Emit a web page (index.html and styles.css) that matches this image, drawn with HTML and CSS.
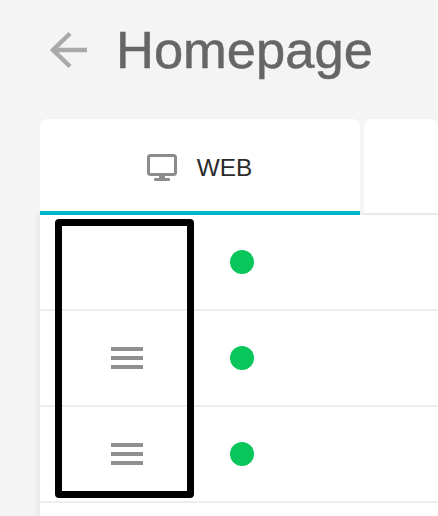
FILE: index.html
```html
<!DOCTYPE html>
<html lang="en">
<head>
<meta charset="utf-8">
<title>Homepage</title>
<link rel="stylesheet" href="styles.css">
</head>
<body>
<main class="page">
  <header class="header">
    <svg class="back" width="38" height="38" viewBox="0 0 38 38" aria-hidden="true"><path d="M37 19H3M20 2.500 3 19l17 16.500" fill="none" stroke="#a9a9a9" stroke-width="4.500"/></svg>
    <h1 class="title">Homepage</h1>
  </header>
  <nav class="tabs">
    <div class="tab tab-active">
      <svg class="monitor" width="30" height="27" viewBox="0 0 30 27" aria-hidden="true"><rect x="1.500" y="1.500" width="27" height="19" rx="2" fill="none" stroke="#8c8c8c" stroke-width="3"/><path d="M12 21h6v3h-6z" fill="#8c8c8c"/><rect x="7" y="24" width="16" height="3" rx="1" fill="#8c8c8c"/></svg>
      <span class="tab-label">WEB</span>
    </div>
    <div class="tab tab-idle"></div>
  </nav>
  <section class="table">
    <div class="row"><div class="cell-handle"></div><span class="dot"></span></div>
    <div class="row"><div class="cell-handle"><span class="burger"><i></i><i></i><i></i></span></div><span class="dot"></span></div>
    <div class="row"><div class="cell-handle"><span class="burger"><i></i><i></i><i></i></span></div><span class="dot"></span></div>
    <div class="highlight"></div>
  </section>
</main>
</body>
</html>
```
FILE: styles.css
```css
* { box-sizing: border-box; }
html, body { margin: 0; height: 100%; overflow: hidden; }
body { background: #f4f4f4; font-family: "Liberation Sans", Arial, sans-serif; }
.page { padding: 0 0 0 40px; height: 516px; }
.header { display: flex; align-items: center; height: 119px; padding: 0 0 20px 10px; }
.back { display: block; flex: none; }
.title { margin: 0 0 0 28px; font-size: 52.500px; font-weight: 400; line-height: 60px; color: #666; -webkit-text-stroke: 0.500px #666; }
.tabs { display: flex; gap: 4px; height: 96px; }
.tab { border-radius: 8px 8px 0 0; background: #fff; }
.tab-active { width: 320px; display: flex; align-items: center; justify-content: center; gap: 20px; padding: 5px 0 0; border-bottom: 4px solid #00b8cc; }
.tab-idle { flex: 1; border-bottom: 2px solid #eee; }
.monitor { display: block; flex: none; margin-left: -1px; }
.tab-label { font-size: 24.400px; color: #2b2b2b; line-height: 26px; }
.table { position: relative; background: #fff; height: 301px; box-shadow: -3px 0 5px rgba(0,0,0,.05); }
.row { display: flex; align-items: center; height: 96px; border-bottom: 2px solid #eee; }
.cell-handle { width: 190px; display: flex; justify-content: center; padding-right: 16px; }
.burger { display: flex; flex-direction: column; gap: 5px; width: 32px; }
.burger i { display: block; height: 3.700px; background: #8f8f8f; }
.dot { width: 24px; height: 24px; border-radius: 50%; background: #08c65b; }
.highlight { position: absolute; left: 15px; top: 4px; width: 139px; height: 279px; border: 7px solid #000; border-radius: 4px; }
```
